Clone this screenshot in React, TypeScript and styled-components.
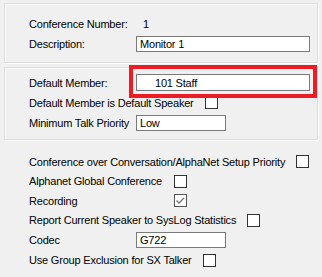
import React from "react";
import styled, { createGlobalStyle } from "styled-components";

const Global = createGlobalStyle`
  html, body { margin: 0; padding: 0; background: #f0f0f0; }
  body {
    font-family: "Liberation Sans", Arial, sans-serif;
    font-size: 11px;
    color: #000;
  }
`;

const Page = styled.div`
  position: relative;
  width: 322px;
  height: 277px;
  padding: 3px 0 0 4px;
  box-sizing: border-box;
  display: flex;
  flex-direction: column;
`;

const Group = styled.div<{ $h: number; $pt: number; $mt?: number }>`
  width: 314px;
  height: ${(p) => p.$h}px;
  margin-top: ${(p) => p.$mt ?? 0}px;
  box-sizing: border-box;
  border: 1px solid #dcdcdc;
  box-shadow: inset 1px 1px 0 #fff, 1px 1px 0 #fff;
  padding: ${(p) => p.$pt}px 0 0 24px;
  display: flex;
  flex-direction: column;
`;

const Loose = styled.div`
  margin-top: 12px;
  padding-left: 25px;
  display: flex;
  flex-direction: column;
`;

const Row = styled.div<{ $h: number }>`
  height: ${(p) => p.$h}px;
  display: flex;
  align-items: center;
`;

const Label = styled.span<{ $w?: number }>`
  white-space: nowrap;
  ${(p) => (p.$w ? `width: ${p.$w}px;` : "")}
  letter-spacing: -0.2px;
`;

const FieldLabel = styled(Label)`
  width: 107px;
  flex: none;
`;

const Value = styled.span`
  margin-left: 7px;
`;

const Input = styled.div<{ $w: number; $h?: number }>`
  width: ${(p) => p.$w}px;
  height: ${(p) => p.$h ?? 16}px;
  box-sizing: border-box;
  border: 1px solid #7a7a7a;
  background: #fff;
  display: flex;
  align-items: center;
  padding-left: 3px;
  letter-spacing: -0.2px;
`;

const Indent = styled.span`
  padding-left: 15px;
`;

const Box = styled.span<{ $checked?: boolean }>`
  flex: none;
  width: 13px;
  height: 13px;
  box-sizing: border-box;
  border: 1px solid ${(p) => (p.$checked ? "#555" : "#333")};
  background: #fff;
  margin-left: 11px;
  display: flex;
  align-items: center;
  justify-content: center;
`;

const Highlight = styled.div`
  position: absolute;
  left: 129px;
  top: 65px;
  width: 188px;
  height: 33px;
  box-sizing: border-box;
  border: 4px solid #ed1c24;
  pointer-events: none;
`;

const Check = ({ checked }: { checked?: boolean }) => (
  <Box $checked={checked}>
    {checked && (
      <svg width="11" height="11" viewBox="0 0 11 11">
        <path d="M1.5 5.5 L4 8 L9 3" fill="none" stroke="#777" strokeWidth="1.3" />
      </svg>
    )}
  </Box>
);

export default function App() {
  return (
    <>
      <Global />
      <Page>
        <Group $h={60} $pt={10}>
          <Row $h={20}>
            <FieldLabel>Conference Number:</FieldLabel>
            <Value>1</Value>
          </Row>
          <Row $h={20}>
            <FieldLabel>Description:</FieldLabel>
            <Input $w={174}>Monitor 1</Input>
          </Row>
        </Group>
        <Group $h={73} $pt={5} $mt={4}>
          <Row $h={19}>
            <FieldLabel>Default Member:</FieldLabel>
            <Input $w={174} $h={17}>
              <Indent>101 Staff</Indent>
            </Input>
          </Row>
          <Row $h={21}>
            <Label>Default Member is Default Speaker</Label>
            <Check />
          </Row>
          <Row $h={19}>
            <FieldLabel>Minimum Talk Priority</FieldLabel>
            <Input $w={90}>Low</Input>
          </Row>
        </Group>
        <Loose>
          <Row $h={19}>
            <Label>Conference over Conversation/AlphaNet Setup Priority</Label>
            <Check />
          </Row>
          <Row $h={20}>
            <Label $w={134}>Alphanet Global Conference</Label>
            <Check />
          </Row>
          <Row $h={19}>
            <Label $w={134}>Recording</Label>
            <Check checked />
          </Row>
          <Row $h={20}>
            <Label>Report Current Speaker to SysLog Statistics</Label>
            <Check />
          </Row>
          <Row $h={20}>
            <FieldLabel>Codec</FieldLabel>
            <Input $w={90}>G722</Input>
          </Row>
          <Row $h={20}>
            <Label>Use Group Exclusion for SX Talker</Label>
            <Check />
          </Row>
        </Loose>
        <Highlight />
      </Page>
    </>
  );
}
